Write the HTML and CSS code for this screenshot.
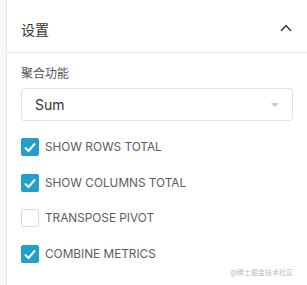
FILE: index.html
```html
<!DOCTYPE html>
<html lang="zh">
  <head>
    <meta charset="UTF-8" />
    <title>设置</title>
    <link rel="stylesheet" href="styles.css">
  </head>
  <body>
    <div class="side"></div>
    <div class="panel">
      <div class="panel-head">
        <span class="title">设置</span>
        <svg class="chevron" width="12" height="8" viewBox="0 0 12 8">
          <path d="M1 7 L6 1.5 L11 7" fill="none" stroke="#333" stroke-width="1.3" />
        </svg>
      </div>
      <div class="panel-body">
        <label class="field-label">聚合功能</label>
        <div class="select">
          <span>Sum</span>
          <span class="caret"></span>
        </div>
        <ul class="checks">
          <li><span class="box on"></span>SHOW ROWS TOTAL</li>
          <li><span class="box on"></span>SHOW COLUMNS TOTAL</li>
          <li><span class="box"></span>TRANSPOSE PIVOT</li>
          <li><span class="box on"></span>COMBINE METRICS</li>
        </ul>
        <div class="mark">@稀土掘金技术社区</div>
      </div>
    </div>
  </body>
</html>
```

FILE: styles.css
```css
* {
  margin: 0;
  padding: 0;
  box-sizing: border-box;
}
body {
  display: flex;
  width: 307px;
  height: 285px;
  font-family: Inter, "Noto Sans CJK SC", sans-serif;
  color: #484848;
  background: #fff;
  overflow: hidden;
}
.side {
  width: 7px;
  background: #f7f7f7;
  border-right: 1px solid #e6e6e6;
}
.panel {
  flex: 1;
}
.panel-head {
  display: flex;
  align-items: center;
  justify-content: space-between;
  height: 53px;
  padding: 6px 15px 0 14px;
  border-bottom: 1px solid #ececec;
}
.title {
  font-size: 14px;
  color: #333;
}
.chevron {
  margin-top: -2px;
}
.panel-body {
  padding: 13px 14px 0 14px;
}
.field-label {
  display: block;
  font-size: 12px;
  color: #555;
  line-height: 16px;
}
.select {
  display: flex;
  align-items: center;
  justify-content: space-between;
  height: 33px;
  margin-top: 6px;
  padding: 0 13px;
  border: 1px solid #e1e1e1;
  border-radius: 3px;
  font-size: 14px;
  color: #333;
}
.caret {
  width: 0;
  height: 0;
  border-left: 4px solid transparent;
  border-right: 4px solid transparent;
  border-top: 4px solid #c8c8c8;
}
.checks {
  list-style: none;
  margin-top: 17px;
}
.checks li {
  display: flex;
  align-items: center;
  height: 18px;
  margin-bottom: 17.7px;
  font-size: 11.8px;
  color: #5c5c5c;
}
.box {
  width: 18px;
  height: 18px;
  margin-right: 6px;
  border: 1px solid #d9d9d9;
  border-radius: 2px;
  background: #fff;
}
.box.on {
  border-color: #22a0cc;
  background: #22a0cc url("data:image/svg+xml,%3Csvg xmlns='http://www.w3.org/2000/svg' width='18' height='18'%3E%3Cpath d='M4 9.5 L7.5 13 L14 5.5' fill='none' stroke='white' stroke-width='2'/%3E%3C/svg%3E") no-repeat center;
}
.mark {
  text-align: right;
  font-size: 7px;
  color: #bbb;
  margin-top: -14px;
  padding-right: 0;
}
```
